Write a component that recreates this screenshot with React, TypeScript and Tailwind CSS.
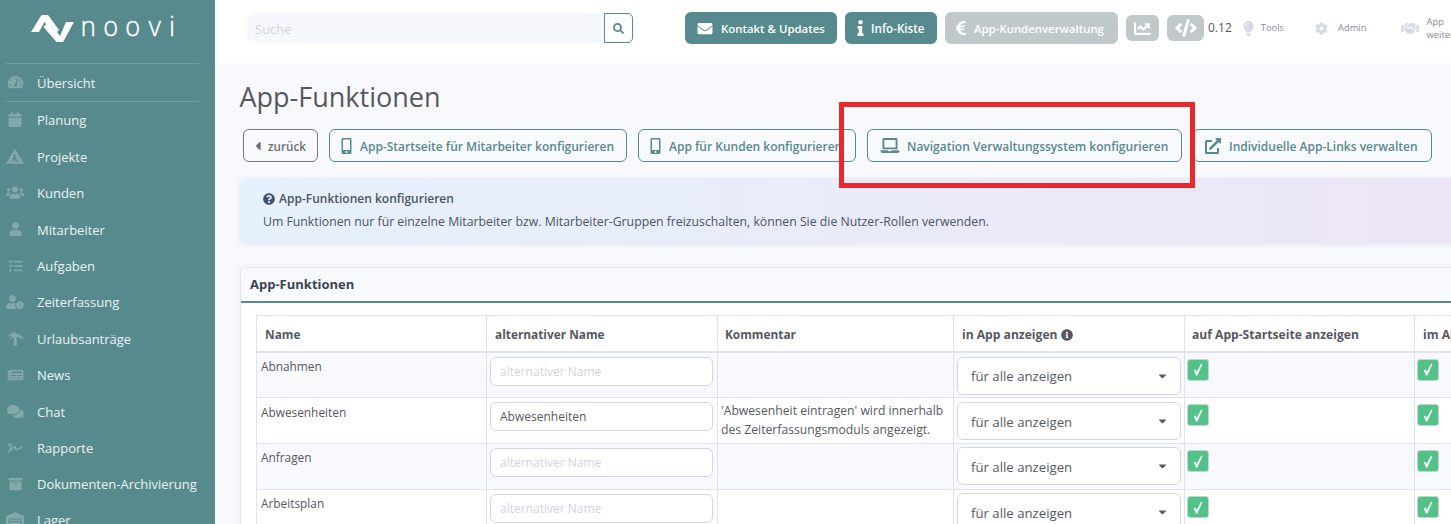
import React from "react";
import {
  FaTachometerAlt, FaCalendar, FaUsers, FaUser, FaTasks, FaUserClock,
  FaNewspaper, FaComments, FaSignature, FaArchive, FaWarehouse, FaSearch, FaEnvelope, FaInfo, FaEuroSign,
  FaChartLine, FaCode, FaLightbulb, FaCog, FaHandshake, FaCaretLeft, FaMobileAlt, FaLaptop, FaExternalLinkAlt,
  FaQuestionCircle, FaInfoCircle, FaCaretDown,
} from "react-icons/fa";

function RoadWorks({ className }: { className?: string }) {
  return (
    <svg viewBox="0 0 18 15" className={className} fill="currentColor">
      <path fillRule="evenodd" d="M8.5 0.3 L9.5 0.3 L18 14.7 L0 14.7 Z M8.6 5 a1.1 1.1 0 1 0 .01 0 Z M7.5 7.5 L6 12.5 L7.3 12.5 L8.4 9.5 L10 12.5 L11.2 12.5 L9.4 8.5 L11.5 10 L12 9.2 Z M11.5 11.5 L11.5 12.8 L14.5 12.8 Z" />
    </svg>
  );
}

function Palm({ className }: { className?: string }) {
  return (
    <svg viewBox="0 0 18 15" className={className} fill="currentColor">
      <path d="M8.5 3.2 C6 0.8 2.5 1.4 1 5.6 C2.8 4.6 4.2 4.4 5.6 4.8 C4.4 5.8 3.6 7 3.4 8.8 C5 7.2 6.2 6.4 7.2 6.2 C7.6 8.8 7.4 11.8 6.6 15 L10.6 15 C10.8 11.5 10.4 8.5 9.6 6 C12 6 14.6 6.8 17.5 9 C16.8 5.2 13.8 2.6 10.6 2.8 C10 1.6 8.5 0.6 6 0.6 C7 1.2 8 2.2 8.5 3.2 Z" />
    </svg>
  );
}

const nav: [React.ComponentType<{ className?: string }>, string, string, string][] = [
  [FaTachometerAlt, "Übersicht", "h-[37px] pt-[2px]", "h-[14px] w-[17px]"],
  [FaCalendar, "Planung", "h-[37px]", "h-[15px] w-[14px]"],
  [RoadWorks, "Projekte", "h-[37px]", "h-[15px] w-[18px]"],
  [FaUsers, "Kunden", "h-[36px]", "h-[15px] w-[18px]"],
  [FaUser, "Mitarbeiter", "h-[37px]", "h-[14px] w-[13px]"],
  [FaTasks, "Aufgaben", "h-[36px]", "h-[14px] w-[15px]"],
  [FaUserClock, "Zeiterfassung", "h-[36px]", "h-[14px] w-[18px]"],
  [Palm, "Urlaubsanträge", "h-[37px]", "h-[15px] w-[17px]"],
  [FaNewspaper, "News", "h-[36px]", "h-[14px] w-[17px]"],
  [FaComments, "Chat", "h-[37px]", "h-[15px] w-[17px]"],
  [FaSignature, "Rapporte", "h-[36px]", "h-[12px] w-[18px]"],
  [FaArchive, "Dokumenten-Archivierung", "h-[36px]", "h-[14px] w-[15px]"],
  [FaWarehouse, "Lager", "h-[36px]", "h-[15px] w-[18px]"],
];

const rows = [
  { name: "Abnahmen", value: "", comment: "", shade: true, namePad: "pt-[3px]", selPad: "pt-[4px]" },
  { name: "Abwesenheiten", value: "Abwesenheiten", comment: "'Abwesenheit eintragen' wird innerhalb des Zeiterfassungsmoduls angezeigt.", shade: false, namePad: "pt-[4px]", selPad: "pt-[4px]" },
  { name: "Anfragen", value: "", comment: "", shade: true, namePad: "pt-[3px]", selPad: "pt-[3px]" },
  { name: "Arbeitsplan", value: "", comment: "", shade: false, namePad: "pt-[3px]", selPad: "pt-[3px]" },
];

function Check() {
  return (
    <span className="flex h-[22px] w-[22px] items-center justify-center rounded-[3px] border border-[#c3d6cc] bg-[#52c288]">
      <svg viewBox="0 0 10 13" className="h-[13px] w-[10px]" fill="#fff">
        <path d="M0.8 7.2 L2.6 6.4 L3.7 9 L8.3 0.6 L9.4 1.2 L4.3 12.4 L3 12.4 Z" />
      </svg>
    </span>
  );
}

function OutlineBtn({ icon, text, className }: { icon: React.ReactNode; text: string; className: string }) {
  return (
    <button className={`flex h-[33px] shrink-0 items-center rounded-[6px] border border-[#578a8c] bg-transparent text-[12px] font-semibold text-[#578a8c] ${className}`}>
      {icon}
      <span className="whitespace-nowrap pt-[2px]">{text}</span>
    </button>
  );
}

export default function App() {
  return (
    <div className="flex h-[524px] w-[1451px] overflow-hidden bg-[#f8f9fd] font-['Open_Sans',sans-serif] text-[#57585f]">
      <aside className="w-[215px] shrink-0 overflow-hidden bg-[#578a8c]">
        <div className="flex h-[63px] items-start pl-[31px] pt-[15px]">
          <svg width="44" height="27" viewBox="0 0 44 27" fill="#fff">
            <path d="M0 17 L10.5 0 L17 0 L28 15 L23.5 20 L13.5 7 L8 17 Z" />
            <path d="M12.5 12 L18 6 L29 21 L35 7 L43 7 L32 27 L25.5 27 Z" />
          </svg>
          <span className="ml-[5px] -mt-[7px] font-['DejaVu_Sans',sans-serif] text-[26px] font-extralight leading-[38px] tracking-[6.2px] text-white [-webkit-text-stroke:0.5px_white]">noovi</span>
        </div>
        <div className="mx-[6px] h-px w-[193px] bg-[#71a0a2]" />
        <div className="flex flex-col">
          {nav.map(([Icon, label, h, size], i) => (
            <React.Fragment key={label}>
              <div className={`flex items-center ${h}`}>
                <span className="-mt-[3px] flex w-[37px] shrink-0 justify-center pr-[7px]">
                  <Icon className={`${size} text-[#82a9aa]`} />
                </span>
                <span className="whitespace-nowrap text-[13px] text-[#e9f3f3]">{label}</span>
              </div>
              {i === 0 && <div className="mx-[6px] h-px w-[193px] bg-[#71a0a2]" />}
            </React.Fragment>
          ))}
        </div>
      </aside>

      <div className="flex min-w-0 flex-1 flex-col">
        <header className="flex h-[63px] shrink-0 items-center overflow-hidden bg-white pb-[7px] pl-[32px]">
          <div className="flex h-[30px] w-[386px] shrink-0">
            <div className="flex w-[357px] items-center rounded-l-[6px] bg-[#f7f8fd] pl-[8px] pt-[3px] text-[13px] text-[#d0d2de]">Suche</div>
            <div className="flex w-[29px] items-center justify-center rounded-r-[5px] border border-[#578a8c] bg-white">
              <FaSearch className="h-[11px] w-[11px] text-[#578a8c]" />
            </div>
          </div>
          <button className="ml-[52px] flex h-[32px] w-[152px] shrink-0 items-center rounded-[6px] bg-[#578a8c] pl-[12px] text-[11.4px] font-semibold text-white">
            <FaEnvelope className="mr-[8px] h-[15px] w-[16px]" /><span className="pt-[2px]">Kontakt &amp; Updates</span>
          </button>
          <button className="ml-[8px] flex h-[32px] w-[92px] shrink-0 items-center rounded-[6px] bg-[#578a8c] pl-[12px] text-[11.6px] font-semibold text-white">
            <FaInfo className="mr-[7px] h-[16px] w-[7px]" /><span className="pt-[2px]">Info-Kiste</span>
          </button>
          <button className="ml-[8px] flex h-[32px] w-[173px] shrink-0 items-center rounded-[6px] bg-[#c0c8ca] pl-[11px] text-[11.4px] font-semibold text-white">
            <FaEuroSign className="mr-[8px] h-[16px] w-[10px]" /><span className="pt-[2px]">App-Kundenverwaltung</span>
          </button>
          <button className="ml-[8px] flex h-[26px] w-[33px] shrink-0 items-center justify-center rounded-[6px] bg-[#c0c8ca] text-white">
            <FaChartLine className="h-[17px] w-[17px]" />
          </button>
          <button className="ml-[8px] flex h-[26px] w-[37px] shrink-0 items-center justify-center rounded-[6px] bg-[#c0c8ca] text-white">
            <FaCode className="h-[18px] w-[22px]" />
          </button>
          <span className="ml-[4px] shrink-0 text-[12px] text-[#57585f]">0.12</span>
          <FaLightbulb className="ml-[11px] h-[15px] w-[11px] shrink-0 text-[#d7d9e4]" />
          <span className="ml-[7px] shrink-0 text-[9.4px] text-[#8a8b96]">Tools</span>
          <FaCog className="ml-[31px] h-[13px] w-[13px] shrink-0 text-[#d7d9e4]" />
          <span className="ml-[10px] shrink-0 text-[9.4px] text-[#8a8b96]">Admin</span>
          <FaHandshake className="ml-[34px] h-[15px] w-[18px] shrink-0 text-[#d7d9e4]" />
          <span className="ml-[8px] shrink-0 text-[9.4px] leading-[13px] text-[#8a8b96]">App<br />weiter</span>
        </header>

        <main className="min-h-0 flex-1 overflow-hidden pl-[25px]">
          <h1 className="-ml-[0.5px] mt-[18px] h-[32px] text-[27px] font-normal leading-[32px] text-[#57585f]">App-Funktionen</h1>
          <div className="ml-[3px] mt-[16px] flex w-[1300px] gap-[11px]">
            <button className="flex h-[33px] w-[75px] shrink-0 items-center rounded-[6px] border border-[#77797f] pl-[11px] text-[11.7px] font-semibold text-[#6d6e75]">
              <FaCaretLeft className="mr-[7px] h-[14px] w-[6px]" /><span className="pt-[2px]">zurück</span>
            </button>
            <OutlineBtn className="w-[298px] pl-[11px]" icon={<FaMobileAlt className="mr-[8px] h-[16px] w-[11px]" />} text="App-Startseite für Mitarbeiter konfigurieren" />
            <OutlineBtn className="w-[218px] pl-[11px]" icon={<FaMobileAlt className="mr-[8px] h-[16px] w-[11px]" />} text="App für Kunden konfigurieren" />
            <OutlineBtn className="w-[315px] pl-[12px]" icon={<FaLaptop className="mr-[7px] h-[15px] w-[20px]" />} text="Navigation Verwaltungssystem konfigurieren" />
            <OutlineBtn className="w-[239px] pl-[11px]" icon={<FaExternalLinkAlt className="mr-[8px] h-[16px] w-[16px]" />} text="Individuelle App-Links verwalten" />
          </div>

          <section className="mt-[16px] h-[64px] w-[1240px] rounded-[8px] bg-gradient-to-r from-[#e5f1fc] to-[#ede5f5] pl-[23px] pt-[12px] shadow-[0_2px_6px_rgba(120,130,170,0.18)]">
            <div className="flex items-center text-[12px] font-semibold leading-[18px] text-[#4c5560]">
              <FaQuestionCircle className="mr-[4px] h-[12px] w-[12px] text-[#3b5366]" />App-Funktionen konfigurieren
            </div>
            <p className="mt-[5px] text-[12.27px] leading-[18px] text-[#4c5560]">Um Funktionen nur für einzelne Mitarbeiter bzw. Mitarbeiter-Gruppen freizuschalten, können Sie die Nutzer-Rollen verwenden.</p>
          </section>

          <section className="mt-[25px] w-[1240px] rounded-t-[6px] border-l border-t border-[#e4e6ee] bg-white shadow-[0_0_6px_rgba(120,130,170,0.12)]">
            <div className="flex h-[35px] items-center rounded-t-[6px] border-b-2 border-[#578a8c] bg-[#f8f9fd] pl-[9px] text-[13px] font-bold text-[#3a4552]">App-Funktionen</div>
            <div className="pl-[15px] pt-[12px]">
              <table className="w-[1260px] table-fixed border-collapse text-[11.85px]">
                <colgroup>
                  <col className="w-[230px]" />
                  <col className="w-[231px]" />
                  <col className="w-[236px]" />
                  <col className="w-[231px]" />
                  <col className="w-[230px]" />
                  <col />
                </colgroup>
                <thead>
                  <tr className="h-[36px] text-left">
                    <th className="border border-b-2 border-[#e1e2ee] pl-[8px] pt-[3px] font-bold text-[#57585f]">Name</th>
                    <th className="border border-b-2 border-[#e1e2ee] pl-[8px] pt-[3px] font-bold text-[#57585f]">alternativer Name</th>
                    <th className="border border-b-2 border-[#e1e2ee] pl-[7px] pt-[3px] font-bold text-[#57585f]">Kommentar</th>
                    <th className="border border-b-2 border-[#e1e2ee] pl-[8px] pt-[3px] text-[12.1px] font-bold text-[#57585f]">
                      <span className="flex items-center">in App anzeigen<FaInfoCircle className="ml-[3px] h-[12px] w-[12px]" /></span>
                    </th>
                    <th className="border border-b-2 border-[#e1e2ee] pl-[7px] pt-[3px] text-[12.1px] font-bold text-[#57585f]">auf App-Startseite anzeigen</th>
                    <th className="whitespace-nowrap border border-b-2 border-[#e1e2ee] pl-[8px] pt-[3px] text-[12.1px] font-bold text-[#57585f]">im App-Menü</th>
                  </tr>
                </thead>
                <tbody>
                  {rows.map((r) => (
                    <tr key={r.name} className={`h-[46px] ${r.shade ? "bg-[#f8f9fd]" : "bg-white"}`}>
                      <td className={`border border-[#e1e2ee] pl-[4px] align-top leading-[20px] ${r.namePad}`}>{r.name}</td>
                      <td className="border border-[#e1e2ee] pl-[3px] pr-[4px] pt-[4px] align-top">
                        <input
                          readOnly
                          value={r.value}
                          placeholder="alternativer Name"
                          className="block h-[29px] w-full rounded-[6px] border border-[#d3d4e6] bg-white pl-[9px] text-[12px] text-[#57585f] outline-none placeholder:text-[#d2d3e0]"
                        />
                      </td>
                      <td className="border border-[#e1e2ee] pl-[3px] pt-[3px] align-top text-[12.2px] leading-[19px]">{r.comment}</td>
                      <td className={`border border-[#e1e2ee] pl-[3px] pr-[3px] align-top ${r.selPad}`}>
                        <div className="flex h-[38px] w-full items-center justify-between rounded-[6px] border border-[#d3d4e6] bg-white pl-[13px] pr-[12px] text-[13.2px]">
                          <span className="pt-[3px]">für alle anzeigen</span>
                          <FaCaretDown className="h-[12px] w-[11px] text-[#57585f]" />
                        </div>
                      </td>
                      <td className="border border-[#e1e2ee] pl-[2px] pt-[6px] align-top"><Check /></td>
                      <td className="border border-[#e1e2ee] pl-[2px] pt-[6px] align-top"><Check /></td>
                    </tr>
                  ))}
                </tbody>
              </table>
            </div>
          </section>
        </main>
      </div>

      <div className="pointer-events-none absolute left-[839px] top-[102px] h-[86px] w-[356px] border-[5px] border-[#e8282b]" />
    </div>
  );
}
